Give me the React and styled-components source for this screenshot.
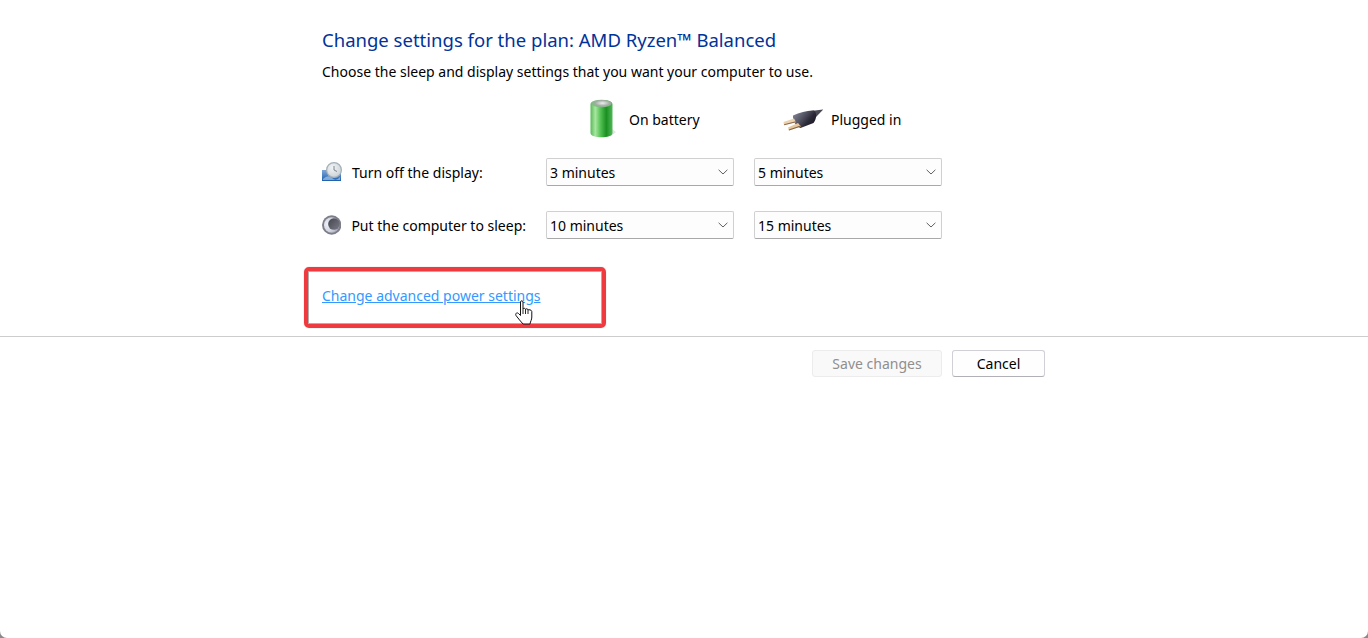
import React from "react";
import styled, { createGlobalStyle } from "styled-components";

const Global = createGlobalStyle`
  html, body { margin: 0; padding: 0; background: #8a8a8a; }
  body { font-family: "Noto Sans", "Open Sans", "Liberation Sans", sans-serif; }
`;

const Page = styled.div`
  position: relative;
  width: 1368px;
  height: 638px;
  overflow: hidden;
  background: #fff;
  border-radius: 0 0 7px 7px;
`;
const Content = styled.main`
  height: 337px;
  box-sizing: border-box;
  padding: 27px 0 0 322px;
  border-bottom: 1px solid #cdcdcd;
`;
const Title = styled.h1`
  margin: 0;
  font-size: 18.53px;
  line-height: 26px;
  font-weight: 400;
  color: #003399;
  white-space: nowrap;
`;
const Intro = styled.p`
  margin: 9px 0 0;
  font-size: 14px;
  line-height: 20px;
  color: #000;
  white-space: nowrap;
`;
const HeaderRow = styled.div`
  display: grid;
  grid-template-columns: 204px 188px 188px;
  column-gap: 20px;
  height: 40px;
  margin-top: 17px;
`;
const HeaderCell = styled.div`
  display: flex;
  align-items: center;
  padding-left: ${(p) => p.$inset}px;
  gap: ${(p) => p.$gap}px;
  font-size: 14px;
  color: #000;
  white-space: nowrap;
`;
const SettingRow = styled.div`
  display: grid;
  grid-template-columns: 204px 188px 188px;
  column-gap: 20px;
  height: 28px;
  margin-top: ${(p) => p.$top}px;
  align-items: center;
`;
const SettingLabel = styled.div`
  display: flex;
  align-items: center;
  gap: 10px;
  font-size: 14px;
  color: #000;
  white-space: nowrap;
`;
const Dropdown = styled.div`
  position: relative;
  box-sizing: border-box;
  height: 28px;
  display: flex;
  align-items: center;
  justify-content: space-between;
  padding: 0 5px 0 3px;
  background: #fdfdfd;
  border: 1px solid #d0d0d0;
  border-bottom-color: #a8a8a8;
  border-radius: 2px;
  font-size: 14px;
  color: #000;
`;
const AdvancedLink = styled.a`
  display: block;
  width: fit-content;
  margin-top: 47px;
  font-size: 14px;
  line-height: 20px;
  color: #3399ff;
  text-decoration: underline;
  white-space: nowrap;
`;
const Highlight = styled.div`
  position: absolute;
  left: 304px;
  top: 267px;
  width: 302px;
  height: 61px;
  box-sizing: border-box;
  border: 4px solid #ef3b3f;
  border-radius: 5px;
  box-shadow: inset 0 0 0 1px rgba(110, 110, 110, 0.55), 0 0 1px rgba(90, 90, 90, 0.6);
`;
const HandCursor = styled.svg`
  position: absolute;
  left: 515px;
  top: 300px;
`;
const Footer = styled.footer`
  display: flex;
  gap: 10px;
  padding: 13px 0 0 812px;
`;
const Button = styled.button`
  box-sizing: border-box;
  width: ${(p) => p.$width}px;
  height: 27px;
  padding: 0;
  font: inherit;
  font-size: 14px;
  border-radius: 3px;
  background: ${(p) => (p.disabled ? "#f9f9f9" : "#fefefe")};
  color: ${(p) => (p.disabled ? "#8f8f8f" : "#000")};
  border: 1px solid ${(p) => (p.disabled ? "#ececec" : "#d0d0d6")};
  border-bottom-color: ${(p) => (p.disabled ? "#ececec" : "#b0b0b6")};
`;

const Chevron = () => (
  <svg width="10" height="6" viewBox="0 0 10 6" fill="none">
    <path d="M0.6 0.8 L5 5 L9.4 0.8" stroke="#606060" strokeWidth="1" />
  </svg>
);

const BatteryIcon = () => (
  <svg width="30" height="40" viewBox="0 0 30 40">
    <defs>
      <linearGradient id="bat" x1="0" x2="1" y1="0" y2="0">
        <stop offset="0" stopColor="#58bb58" />
        <stop offset="0.22" stopColor="#a8e6a0" />
        <stop offset="0.45" stopColor="#55c255" />
        <stop offset="0.72" stopColor="#1a8f22" />
        <stop offset="1" stopColor="#52b858" />
      </linearGradient>
      <radialGradient id="batTop" cx="0.55" cy="0.45" r="0.6">
        <stop offset="0" stopColor="#eeeeee" />
        <stop offset="0.6" stopColor="#a2aca3" />
        <stop offset="1" stopColor="#74c279" />
      </radialGradient>
    </defs>
    <path d="M26 30 L30 33 L24 38 Z" fill="#d8d8d8" opacity="0.7" />
    <path d="M4.5 5 C4.5 -0.5 26.5 -0.5 26.5 5 L26.5 34 C26.5 39.8 4.5 39.8 4.5 34 Z" fill="url(#bat)" />
    <ellipse cx="15.5" cy="4.5" rx="10" ry="3.8" fill="url(#batTop)" />
  </svg>
);

const PlugIcon = () => (
  <svg width="40" height="24" viewBox="0 0 40 24">
    <defs>
      <linearGradient id="plug" x1="0" x2="1" y1="0" y2="0.6">
        <stop offset="0" stopColor="#8d8f9e" />
        <stop offset="0.45" stopColor="#565766" />
        <stop offset="0.75" stopColor="#2c2a38" />
        <stop offset="1" stopColor="#1b1b24" />
      </linearGradient>
    </defs>
    <path d="M28 4 L40.3 2.5 L33 10 Z" fill="#4a4a55" />
    <path d="M10 8.5 C17 5.5 25 3 31 3.5 C34 6 34 11 30.5 16 L17.5 21 C13 19.5 9.5 14 10 8.5 Z" fill="url(#plug)" />
    <path d="M11 11.5 L0.5 15 L1 18.2 L13 15.2 Z" fill="#ecd2ae" />
    <path d="M1 17.2 L12.8 14.2 L13 15.2 L1.2 18.2 Z" fill="#8a6a4a" />
    <path d="M15 16 L5 20.6 L6 23.4 L18 19.5 Z" fill="#e6c8a0" />
    <path d="M5.7 22.4 L17.5 18.4 L18 19.5 L6 23.4 Z" fill="#84633f" />
  </svg>
);

const DisplayIcon = () => (
  <svg width="20" height="20" viewBox="0 0 20 20">
    <defs>
      <linearGradient id="disp" x1="0" x2="0" y1="0" y2="1">
        <stop offset="0" stopColor="#7fa7d8" />
        <stop offset="1" stopColor="#1d5fae" />
      </linearGradient>
      <radialGradient id="dial" cx="0.4" cy="0.35" r="0.8">
        <stop offset="0" stopColor="#f2f4f5" />
        <stop offset="1" stopColor="#c4ccd2" />
      </radialGradient>
    </defs>
    <rect x="0" y="8" width="19" height="11" fill="url(#disp)" />
    <path d="M1 17 Q6 12 10 16 T18 15 V18 H1 Z" fill="#bcd4ee" opacity="0.6" />
    <circle cx="12" cy="8" r="7.4" fill="url(#dial)" stroke="#a6b0b8" strokeWidth="1.2" />
    <path d="M12 4 V8 L15 9.5" stroke="#7c8890" strokeWidth="1" fill="none" />
  </svg>
);

const SleepIcon = () => (
  <svg width="20" height="20" viewBox="0 0 20 20">
    <defs>
      <radialGradient id="moon" cx="0.25" cy="0.45" r="0.8">
        <stop offset="0" stopColor="#f0f2fa" />
        <stop offset="0.6" stopColor="#cfd1dc" />
        <stop offset="1" stopColor="#9a9cab" />
      </radialGradient>
      <linearGradient id="moonDark" x1="0" x2="1" y1="0" y2="1">
        <stop offset="0" stopColor="#45454f" />
        <stop offset="1" stopColor="#7a7a86" />
      </linearGradient>
    </defs>
    <circle cx="10" cy="10" r="10" fill="#7c7e8a" />
    <circle cx="10" cy="10" r="8" fill="url(#moon)" />
    <circle cx="12.3" cy="9" r="6" fill="url(#moonDark)" />
  </svg>
);

const rows = [
  { icon: <DisplayIcon />, label: "Turn off the display:", battery: "3 minutes", plugged: "5 minutes", top: 19 },
  { icon: <SleepIcon />, label: "Put the computer to sleep:", battery: "10 minutes", plugged: "15 minutes", top: 25 },
];

export default function App() {
  return (
    <Page>
      <Global />
      <Content>
        <Title>Change settings for the plan: AMD Ryzen™ Balanced</Title>
        <Intro>Choose the sleep and display settings that you want your computer to use.</Intro>
        <HeaderRow>
          <div />
          <HeaderCell $inset={40} $gap={13}><BatteryIcon />On battery</HeaderCell>
          <HeaderCell $inset={29} $gap={8}><PlugIcon />Plugged in</HeaderCell>
        </HeaderRow>
        {rows.map((r) => (
          <SettingRow key={r.label} $top={r.top}>
            <SettingLabel>{r.icon}{r.label}</SettingLabel>
            <Dropdown>{r.battery}<Chevron /></Dropdown>
            <Dropdown>{r.plugged}<Chevron /></Dropdown>
          </SettingRow>
        ))}
        <AdvancedLink>Change advanced power settings</AdvancedLink>
      </Content>
      <Footer>
        <Button disabled $width={130}>Save changes</Button>
        <Button $width={93}>Cancel</Button>
      </Footer>
      <Highlight />
      <HandCursor width="18" height="25" viewBox="0 0 18 25">
        <path
          d="M5.5 2 C5.5 0.4 8 0.4 8 2 V9 C8.5 8 10.5 8 10.5 9.5 C11 8.5 13 8.5 13 10 C13.5 9.5 16.5 9.5 16.8 11.5 V17 C16.8 20 15.5 21 15 24 H8 C6 21.5 3 18.5 1 15.5 C0 13.5 2 12 3.5 13.5 L5.5 15.5 Z"
          fill="#fff"
          stroke="#111"
          strokeWidth="1"
          strokeLinejoin="round"
        />
        <path d="M8 9 V14 M10.5 9.5 V14 M13 10 V14" stroke="#111" strokeWidth="0.9" />
      </HandCursor>
    </Page>
  );
}
